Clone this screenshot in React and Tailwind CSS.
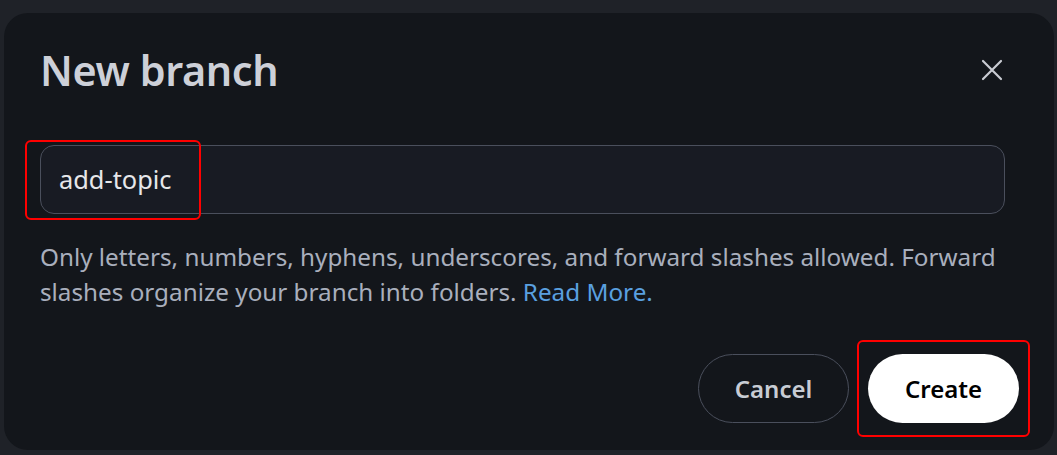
import React from "react";

export default function App() {
  const font = { fontFamily: '"Noto Sans", "Open Sans", sans-serif' };
  return (
    <div className="w-[1057px] h-[455px] bg-[#1f2228] pt-[13px] pl-[4px] pr-[3px] overflow-hidden" style={font}>
      <div className="h-[437px] rounded-[24px] bg-[#13161b] pl-[36px] pr-[49px] pt-[38px] flex flex-col">
        <div className="flex items-center justify-between h-[40px]">
          <h1 className="text-[41.4px] font-semibold leading-none text-[#cdd0d8] tracking-[-0.4px]">New branch</h1>
          <button className="w-[30px] h-[30px] flex items-center justify-center mr-[-2px] mt-[-2px]">
            <svg width="22" height="22" viewBox="0 0 22 22" fill="none" stroke="#c9ccd3" strokeWidth="2.2" strokeLinecap="round">
              <path d="M2 2 L20 20 M20 2 L2 20" />
            </svg>
          </button>
        </div>
        <div className="relative mt-[54px]">
          <div className="h-[69px] rounded-[14px] border-[1.5px] border-[#4a4f5c] bg-[#181b23] flex items-center pl-[18px]">
            <span className="text-[25.4px] text-[#e6e7ea]">add-topic</span>
          </div>
          <div className="absolute left-[-15px] top-[-5px] w-[176px] h-[80px] border-2 border-[#ff0000] rounded-[6px]" />
        </div>
        <p className="mt-[25px] text-[24.25px] leading-[35px] text-[#a9afbd]">
          Only letters, numbers, hyphens, underscores, and forward slashes allowed. Forward slashes organize your branch into folders.{" "}
          <span className="text-[#5aa0e0]">Read More.</span>
        </p>
        <div className="flex justify-end gap-[19px] mt-[45px] mr-[-14px]">
          <button className="w-[151px] h-[69px] rounded-full border-[1.5px] border-[#4a4f5c] text-[24px] font-semibold text-[#c8ccd4]">Cancel</button>
          <div className="relative">
            <button className="w-[151px] h-[69px] rounded-full bg-white text-[24px] font-semibold text-[#000]">Create</button>
            <div className="absolute left-[-11px] top-[-14px] w-[173px] h-[97px] border-2 border-[#ff0000] rounded-[6px]" />
          </div>
        </div>
      </div>
    </div>
  );
}
